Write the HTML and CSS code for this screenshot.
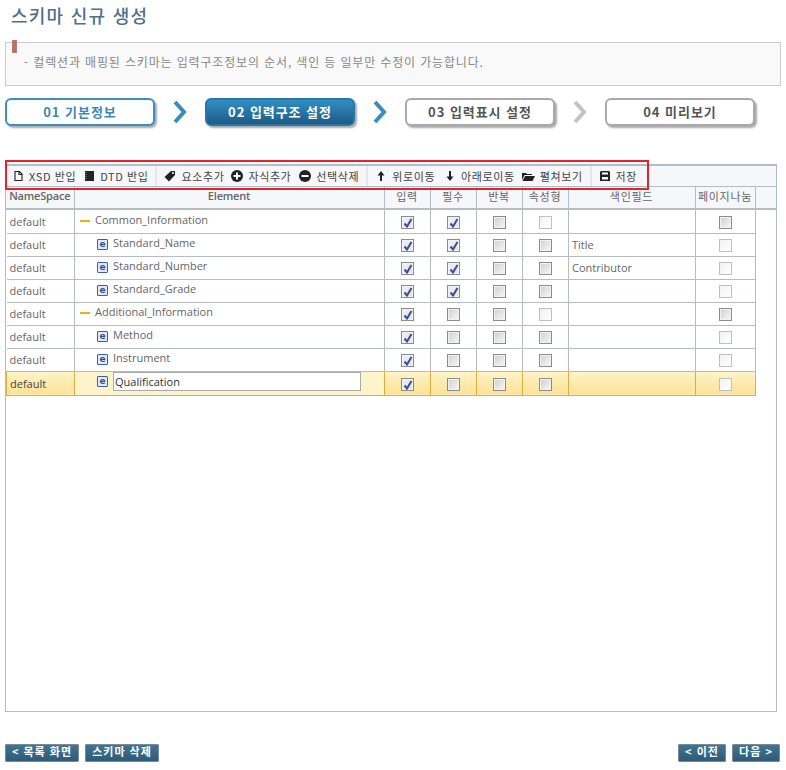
FILE: index.html
```html
<!DOCTYPE html>
<html lang="ko">

<head>
    <meta charset="utf-8" />
    <meta name="viewport" content="width=device-width, initial-scale=1.0" />
    <title>스키마 신규 생성</title>
    <link rel="stylesheet" href="styles.css">
</head>

<body>
    <svg class="defs" width="0" height="0">
        <symbol id="i-page" viewBox="0 0 9 10"><path d="M1 .5h4.500L8 3v6.500H1z M5 .5V3.500H8" fill="none" stroke="#222" stroke-width="1.100"/></symbol>
        <symbol id="i-book" viewBox="0 0 9 10"><path d="M0 0h9v10H0z" fill="#222"/><path d="M1 1v8" stroke="#999" stroke-dasharray="1 1" fill="none"/></symbol>
        <symbol id="i-tag" viewBox="0 0 12 12"><path d="M7 1h4v4L5 11.500.5 7z" fill="#222"/><circle cx="9" cy="3" r="1" fill="#fff"/></symbol>
        <symbol id="i-plus" viewBox="0 0 12 12"><circle cx="6" cy="6" r="6" fill="#222"/><path d="M2.500 6h7M6 2.500v7" stroke="#fff" stroke-width="2"/></symbol>
        <symbol id="i-minus" viewBox="0 0 12 12"><circle cx="6" cy="6" r="6" fill="#222"/><path d="M2.500 6h7" stroke="#fff" stroke-width="2"/></symbol>
        <symbol id="i-up" viewBox="0 0 8 10"><path d="M4 0l3.500 4.500H5V10H3V4.500H.5z" fill="#222"/></symbol>
        <symbol id="i-down" viewBox="0 0 8 10"><path d="M4 10L.5 5.500H3V0h2v5.500h2.500z" fill="#222"/></symbol>
        <symbol id="i-folder" viewBox="0 0 13 9"><path d="M0 1h4l1 1h5v1H2.500L0 8z" fill="#222"/><path d="M3 4h10l-2.500 5H.5z" fill="#222"/></symbol>
        <symbol id="i-save" viewBox="0 0 10 10"><path d="M1 0h8l1 1v9H0V1z" fill="#222"/><path d="M2 1.500h6v2H2zM2 6h6v2.500H2z" fill="#fff"/></symbol>
        <symbol id="i-check" viewBox="0 0 10 10"><path d="M1.500 5.500L4 8.500 8.500 1" fill="none" stroke="#3c4f95" stroke-width="2"/></symbol>
    </svg>

    <div class="page">
        <h1 class="page-title">스키마 신규 생성</h1>

        <div class="notice">
            <span class="bookmark"></span>
            - 컬렉션과 매핑된 스키마는 입력구조정보의 순서, 색인 등 일부만 수정이 가능합니다.
        </div>

        <ol class="steps">
            <li class="step step-done">01 기본정보</li>
            <li class="step-arrow"><svg width="14" height="22" viewBox="0 0 14 22"><path d="M2 1l9 10-9 10" fill="none" stroke="#3a8dbb" stroke-width="4"/></svg></li>
            <li class="step step-current">02 입력구조 설정</li>
            <li class="step-arrow"><svg width="14" height="22" viewBox="0 0 14 22"><path d="M2 1l9 10-9 10" fill="none" stroke="#3a8dbb" stroke-width="4"/></svg></li>
            <li class="step">03 입력표시 설정</li>
            <li class="step-arrow"><svg width="14" height="22" viewBox="0 0 14 22"><path d="M2 1l9 10-9 10" fill="none" stroke="#c4c4c4" stroke-width="4"/></svg></li>
            <li class="step">04 미리보기</li>
        </ol>

        <div class="grid">
            <div class="toolbar">
                <span class="tool tool-xsd"><svg class="tool-icon" width="9" height="10"><use href="#i-page"/></svg>XSD 반입</span>
                <span class="tool tool-dtd"><svg class="tool-icon" width="9" height="10"><use href="#i-book"/></svg>DTD 반입</span>
                <span class="tool-sep tool-sep-first"></span>
                <span class="tool tool-add"><svg class="tool-icon" width="12" height="12"><use href="#i-tag"/></svg>요소추가</span>
                <span class="tool tool-child"><svg class="tool-icon" width="12" height="12"><use href="#i-plus"/></svg>자식추가</span>
                <span class="tool tool-del"><svg class="tool-icon" width="12" height="12"><use href="#i-minus"/></svg>선택삭제</span>
                <span class="tool-sep"></span>
                <span class="tool tool-up"><svg class="tool-icon" width="8" height="10"><use href="#i-up"/></svg>위로이동</span>
                <span class="tool tool-down"><svg class="tool-icon" width="8" height="10"><use href="#i-down"/></svg>아래로이동</span>
                <span class="tool tool-open"><svg class="tool-icon" width="13" height="9"><use href="#i-folder"/></svg>펼쳐보기</span>
                <span class="tool-sep"></span>
                <span class="tool tool-save"><svg class="tool-icon" width="10" height="10"><use href="#i-save"/></svg>저장</span>
                <div class="marker"></div>
            </div>

            <table class="grid-head">
                <colgroup>
                    <col class="c-ns"><col class="c-el"><col class="c-ck"><col class="c-ck"><col class="c-ck"><col class="c-ck"><col class="c-idx"><col class="c-pg"><col>
                </colgroup>
                <tr>
                    <th class="th-latin">NameSpace</th>
                    <th class="th-latin">Element</th>
                    <th>입력</th>
                    <th>필수</th>
                    <th>반복</th>
                    <th>속성형</th>
                    <th>색인필드</th>
                    <th>페이지나눔</th>
                    <th></th>
                </tr>
            </table>

            <table class="grid-body">
                <colgroup>
                    <col class="c-ns"><col class="c-el"><col class="c-ck"><col class="c-ck"><col class="c-ck"><col class="c-ck"><col class="c-idx"><col class="c-pg">
                </colgroup>
                <tr>
                    <td>default</td>
                    <td class="el"><span class="collapse"></span>Common_Information</td>
                    <td class="ck"><span class="cb on"><svg width="10" height="10"><use href="#i-check"/></svg></span></td>
                    <td class="ck"><span class="cb on"><svg width="10" height="10"><use href="#i-check"/></svg></span></td>
                    <td class="ck"><span class="cb"></span></td>
                    <td class="ck"><span class="cb off"></span></td>
                    <td></td>
                    <td class="ck"><span class="cb"></span></td>
                </tr>
                <tr>
                    <td>default</td>
                    <td class="el child"><span class="el-icon">e</span>Standard_Name</td>
                    <td class="ck"><span class="cb on"><svg width="10" height="10"><use href="#i-check"/></svg></span></td>
                    <td class="ck"><span class="cb on"><svg width="10" height="10"><use href="#i-check"/></svg></span></td>
                    <td class="ck"><span class="cb"></span></td>
                    <td class="ck"><span class="cb"></span></td>
                    <td>Title</td>
                    <td class="ck"><span class="cb off"></span></td>
                </tr>
                <tr>
                    <td>default</td>
                    <td class="el child"><span class="el-icon">e</span>Standard_Number</td>
                    <td class="ck"><span class="cb on"><svg width="10" height="10"><use href="#i-check"/></svg></span></td>
                    <td class="ck"><span class="cb on"><svg width="10" height="10"><use href="#i-check"/></svg></span></td>
                    <td class="ck"><span class="cb"></span></td>
                    <td class="ck"><span class="cb"></span></td>
                    <td>Contributor</td>
                    <td class="ck"><span class="cb off"></span></td>
                </tr>
                <tr>
                    <td>default</td>
                    <td class="el child"><span class="el-icon">e</span>Standard_Grade</td>
                    <td class="ck"><span class="cb on"><svg width="10" height="10"><use href="#i-check"/></svg></span></td>
                    <td class="ck"><span class="cb on"><svg width="10" height="10"><use href="#i-check"/></svg></span></td>
                    <td class="ck"><span class="cb"></span></td>
                    <td class="ck"><span class="cb"></span></td>
                    <td></td>
                    <td class="ck"><span class="cb off"></span></td>
                </tr>
                <tr>
                    <td>default</td>
                    <td class="el"><span class="collapse"></span>Additional_Information</td>
                    <td class="ck"><span class="cb on"><svg width="10" height="10"><use href="#i-check"/></svg></span></td>
                    <td class="ck"><span class="cb"></span></td>
                    <td class="ck"><span class="cb"></span></td>
                    <td class="ck"><span class="cb off"></span></td>
                    <td></td>
                    <td class="ck"><span class="cb"></span></td>
                </tr>
                <tr>
                    <td>default</td>
                    <td class="el child"><span class="el-icon">e</span>Method</td>
                    <td class="ck"><span class="cb on"><svg width="10" height="10"><use href="#i-check"/></svg></span></td>
                    <td class="ck"><span class="cb"></span></td>
                    <td class="ck"><span class="cb"></span></td>
                    <td class="ck"><span class="cb"></span></td>
                    <td></td>
                    <td class="ck"><span class="cb off"></span></td>
                </tr>
                <tr>
                    <td>default</td>
                    <td class="el child"><span class="el-icon">e</span>Instrument</td>
                    <td class="ck"><span class="cb on"><svg width="10" height="10"><use href="#i-check"/></svg></span></td>
                    <td class="ck"><span class="cb"></span></td>
                    <td class="ck"><span class="cb"></span></td>
                    <td class="ck"><span class="cb"></span></td>
                    <td></td>
                    <td class="ck"><span class="cb off"></span></td>
                </tr>
                <tr class="selected">
                    <td>default</td>
                    <td class="el child"><span class="el-icon">e</span><input class="el-input" type="text" value="Qualification"></td>
                    <td class="ck"><span class="cb on"><svg width="10" height="10"><use href="#i-check"/></svg></span></td>
                    <td class="ck"><span class="cb"></span></td>
                    <td class="ck"><span class="cb"></span></td>
                    <td class="ck"><span class="cb"></span></td>
                    <td></td>
                    <td class="ck"><span class="cb off"></span></td>
                </tr>
            </table>
        </div>

        <div class="actions">
            <button class="btn btn-wide" type="button">&lt; 목록 화면</button>
            <button class="btn btn-wide" type="button">스키마 삭제</button>
            <span class="actions-space"></span>
            <button class="btn" type="button">&lt; 이전</button>
            <button class="btn" type="button">다음 &gt;</button>
        </div>
    </div>
</body>

</html>
```

FILE: styles.css
```css
* {
    box-sizing: border-box;
}

body {
    margin: 0;
    font-family: "Open Sans", "Noto Sans CJK KR", sans-serif;
    font-size: 11px;
    color: #666;
    background-color: #fff;
}

.defs {
    position: absolute;
}

.page {
    width: 786px;
    height: 770px;
    padding: 0 5px;
    overflow: hidden;
}

.page-title {
    margin: 0;
    padding: 3px 0 0 6px;
    height: 42px;
    font-family: "Noto Sans CJK KR", sans-serif;
    font-size: 18px;
    line-height: 24px;
    font-weight: 500;
    letter-spacing: 1.25px;
    color: #4f6f8a;
}

.notice {
    position: relative;
    width: 776px;
    height: 44px;
    padding: 10px 0 0 18px;
    font-family: "Noto Sans CJK KR", sans-serif;
    font-size: 12px;
    line-height: 18px;
    letter-spacing: 0.85px;
    color: #888;
    background-color: #f9f9f9;
    border: 1px solid #ccc;
}

.bookmark {
    position: absolute;
    left: 6px;
    top: -3px;
    width: 5px;
    height: 13px;
    background-color: #d9655a;
    border: 1px solid #a8837c;
}

.steps {
    display: flex;
    align-items: center;
    margin: 12px 0 0;
    padding: 0;
    list-style: none;
}

.step {
    width: 150px;
    height: 28px;
    font-family: "Noto Sans CJK KR", sans-serif;
    font-size: 13px;
    line-height: 24px;
    font-weight: 700;
    letter-spacing: 0.95px;
    text-align: center;
    color: #555;
    background-color: #fff;
    border: 2px solid #aaa;
    border-radius: 6px;
    box-shadow: 2px 2px 2px #aaa;
}

.step-done {
    color: #3d87b5;
    border-color: #3d8fbf;
}

.step-current {
    color: #fff;
    background: linear-gradient(#2f8fc4, #1f5a85);
    border-color: #2a76a6;
}

.step-arrow {
    display: flex;
    justify-content: center;
    width: 50px;
    height: 28px;
    padding-top: 3px;
}

.grid {
    width: 772px;
    height: 548px;
    margin-top: 38px;
    border: 1px solid #b4bdc6;
    border-top: 0;
}

.toolbar {
    position: relative;
    display: flex;
    align-items: center;
    height: 23px;
    background-color: #f5f7fa;
    border-top: 2px solid #b4bdc6;
    border-bottom: 1px solid #b4bdc6;
    font-family: "Noto Sans CJK KR", sans-serif;
    color: #444;
}

.tool {
    display: flex;
    align-items: center;
    white-space: nowrap;
    letter-spacing: 0.6px;
}

.tool-icon {
    margin-right: 7px;
    flex: none;
}

.tool-xsd .tool-icon,
.tool-dtd .tool-icon,
.tool-add .tool-icon,
.tool-save .tool-icon {
    margin-right: 6px;
}

.tool-child .tool-icon,
.tool-del .tool-icon,
.tool-open .tool-icon {
    margin-right: 5px;
}

.tool-xsd { margin-left: 8px; }
.tool-dtd { margin-left: 9px; }
.tool-add { margin-left: 7px; }
.tool-child { margin-left: 7px; }
.tool-del { margin-left: 8px; }
.tool-up { margin-left: 9px; }
.tool-down { margin-left: 11px; }
.tool-open { margin-left: 7px; }
.tool-save { margin-left: 8px; }

.tool-sep {
    width: 2px;
    height: 20px;
    margin-left: 7px;
    background-color: #e4e7eb;
}

.tool-sep-first {
    margin-left: 6px;
}

.marker {
    position: absolute;
    left: -1px;
    top: -6px;
    width: 644px;
    height: 30px;
    border: 2px solid #e8212b;
}

.grid-head,
.grid-body {
    table-layout: fixed;
    border-collapse: collapse;
}

.grid-head {
    width: 770px;
    background-color: #f5f7fa;
}

.grid-body {
    width: 749px;
}

.c-ns { width: 68px; }
.c-el { width: 310px; }
.c-ck { width: 46px; }
.c-idx { width: 127px; }
.c-pg { width: 60px; }

.grid-head th {
    height: 22px;
    padding: 0 0 4px;
    font-weight: 400;
    line-height: 14px;
    letter-spacing: 0.7px;
    white-space: nowrap;
    border-right: 1px solid #b4bdc6;
    border-bottom: 2px solid #b4bdc6;
    font-family: "Noto Sans CJK KR", sans-serif;
}

.grid-head th.th-latin {
    font-family: "Open Sans", sans-serif;
    font-weight: 600;
    letter-spacing: -0.2px;
}

.grid-head th:last-child {
    border-right: 0;
}

.grid-body td {
    height: 23px;
    padding: 0 0 0 3px;
    white-space: nowrap;
    border: 1px solid #b4bdc6;
    border-top: 0;
}

.grid-body td:first-child {
    border-left: 0;
}

.grid-body td.el {
    padding: 0 0 4px 5px;
}

.grid-body td.child {
    padding-left: 22px;
}

.grid-body td.ck {
    padding: 0;
    text-align: center;
}

.collapse {
    display: inline-block;
    width: 10px;
    height: 2px;
    margin-right: 5px;
    vertical-align: middle;
    background-color: #e8b500;
}

.el-icon {
    display: inline-block;
    width: 11px;
    height: 11px;
    margin-right: 5px;
    font: 700 9px/9px "DejaVu Sans", sans-serif;
    text-align: center;
    vertical-align: middle;
    color: #2f4f9a;
    background-color: #e3e8f2;
    border: 1px solid #3f5fa0;
    border-radius: 1px;
}

.el-input {
    width: 248px;
    height: 19px;
    padding: 0 1px;
    font-family: "Open Sans", sans-serif;
    font-size: 11px;
    color: #333;
    vertical-align: middle;
    background-color: #fff;
    border: 1px solid #aaa;
}

.cb {
    display: inline-block;
    width: 13px;
    height: 13px;
    padding: 1px;
    vertical-align: middle;
    background: linear-gradient(135deg, #cfcfcf, #f8f8f8);
    border: 1px solid #8c8c8c;
    box-shadow: inset 0 0 0 1px #f2f2f2;
}

.cb svg {
    display: block;
}

.cb.on {
    background: linear-gradient(135deg, #eef0f6, #dfe3ee);
}

.cb.off {
    background: linear-gradient(135deg, #f2f2f2, #fff);
    border-color: #c0c0c0;
    box-shadow: none;
}

.selected td {
    color: #444;
    background: linear-gradient(#fff3c9, #fde296);
}

.grid-body .selected td {
    border-color: #e0ae3c;
    border-top: 1px solid #b4bdc6;
}

.grid-body .selected td:first-child {
    border-left: 1px solid #e0ae3c;
}

.grid-body .selected td.el {
    background: #fef4cc;
}

.actions {
    display: flex;
    gap: 6px;
    width: 775px;
    margin-top: 32px;
}

.actions-space {
    flex: 1;
}

.btn {
    width: 48px;
    height: 18px;
    padding: 0 0 4px;
    font-family: "Noto Sans CJK KR", sans-serif;
    font-size: 11px;
    line-height: 13px;
    font-weight: 700;
    letter-spacing: 1px;
    white-space: nowrap;
    color: #fff;
    background: linear-gradient(#3f7595, #2f5a78);
    border: 1px solid #7b8a96;
    border-radius: 1px;
}

.btn-wide {
    width: 74px;
}
```
